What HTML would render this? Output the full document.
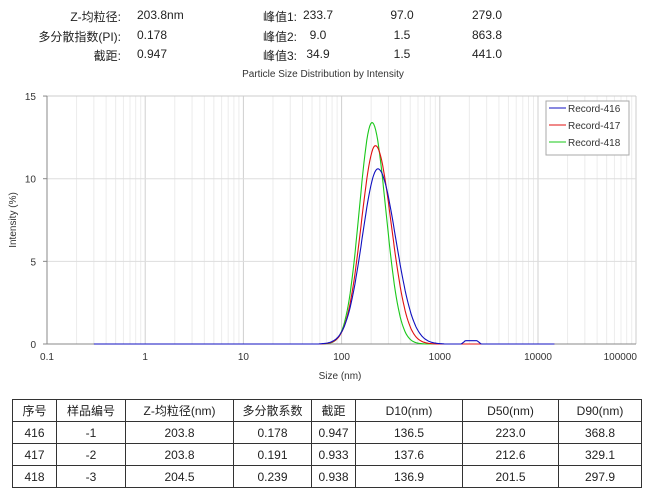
<!DOCTYPE html>
<html><head><meta charset="utf-8"><style>
body{margin:0;width:650px;height:499px;background:#fff;position:relative;overflow:hidden;font-family:"Liberation Sans","Noto Sans CJK SC",sans-serif;color:#222}
.t{position:absolute;font-size:12px;white-space:nowrap}
.r{text-align:right}
.c{text-align:center}
table{position:absolute;left:12px;top:399px;border-collapse:collapse;font-size:12px;font-family:"Liberation Sans","Noto Sans CJK SC",sans-serif}
td{border:1px solid #333;text-align:center;height:21px;padding:0}
</style></head><body>
<div class="t r" style="left:0;width:121px;top:8px">Z-均粒径:</div>
<div class="t r" style="left:0;width:121px;top:28px">多分散指数(PI):</div>
<div class="t r" style="left:0;width:121px;top:47px">截距:</div>
<div class="t" style="left:137px;top:8px">203.8nm</div>
<div class="t" style="left:137px;top:28px">0.178</div>
<div class="t" style="left:137px;top:47px">0.947</div>
<div class="t r" style="left:200px;width:97px;top:8px">峰值1:</div>
<div class="t r" style="left:200px;width:97px;top:28px">峰值2:</div>
<div class="t r" style="left:200px;width:97px;top:47px">峰值3:</div>
<div class="t c" style="left:298px;width:40px;top:8px">233.7</div>
<div class="t c" style="left:298px;width:40px;top:28px">9.0</div>
<div class="t c" style="left:298px;width:40px;top:47px">34.9</div>
<div class="t c" style="left:382px;width:40px;top:8px">97.0</div>
<div class="t c" style="left:382px;width:40px;top:28px">1.5</div>
<div class="t c" style="left:382px;width:40px;top:47px">1.5</div>
<div class="t c" style="left:467px;width:40px;top:8px">279.0</div>
<div class="t c" style="left:467px;width:40px;top:28px">863.8</div>
<div class="t c" style="left:467px;width:40px;top:47px">441.0</div>
<div class="t c" style="left:200px;width:246px;top:69px;font-size:10px;color:#333">Particle Size Distribution by Intensity</div>
<svg id="p" width="650" height="499" style="position:absolute;left:0;top:0" font-family="Liberation Sans, sans-serif" font-size="10" fill="#333"></svg>
<table>
<tr><td style="width:43px">序号</td><td style="width:68px">样品编号</td><td style="width:107px">Z-均粒径(nm)</td><td style="width:77px">多分散系数</td><td style="width:43px">截距</td><td style="width:106px">D10(nm)</td><td style="width:95px">D50(nm)</td><td style="width:82px">D90(nm)</td></tr>
<tr><td>416</td><td>-1</td><td>203.8</td><td>0.178</td><td>0.947</td><td>136.5</td><td>223.0</td><td>368.8</td></tr>
<tr><td>417</td><td>-2</td><td>203.8</td><td>0.191</td><td>0.933</td><td>137.6</td><td>212.6</td><td>329.1</td></tr>
<tr><td>418</td><td>-3</td><td>204.5</td><td>0.239</td><td>0.938</td><td>136.9</td><td>201.5</td><td>297.9</td></tr>
</table>
<script>
var s=document.getElementById('p'),h='';
var X=function(v){return 47+98.2*(Math.log10(v)+1)},Y=function(v){return 344-v*16.53};
for(var d=-1;d<5;d++)for(var k=1;k<10;k++){var x=X(k*Math.pow(10,d));h+='<line x1="'+x+'" x2="'+x+'" y1="96" y2="344" stroke="'+(k==1?'#d0d0d0':'#ececec')+'" stroke-width="1"/>';}
h+='<line x1="47" x2="636" y1="96" y2="96" stroke="#ccc"/><line x1="636" x2="636" y1="96" y2="344" stroke="#ccc"/>';
[5,10].forEach(function(v){h+='<line x1="47" x2="636" y1="'+Y(v)+'" y2="'+Y(v)+'" stroke="#ddd"/>'});
h+='<line x1="47" x2="47" y1="96" y2="344" stroke="#888"/><line x1="47" x2="636" y1="344" y2="344" stroke="#888"/>';
[0,5,10,15].forEach(function(v){h+='<text x="36" y="'+(Y(v)+4)+'" text-anchor="end">'+v+'</text><line x1="43" x2="47" y1="'+Y(v)+'" y2="'+Y(v)+'" stroke="#888"/>'});
['0.1','1','10','100','1000','10000','100000'].forEach(function(t,i){h+='<text x="'+(i==6?637:47+98.2*i)+'" y="360" text-anchor="'+(i==6?'end':'middle')+'">'+t+'</text>'});
h+='<text x="340" y="379" text-anchor="middle">Size (nm)</text>';
h+='<text transform="translate(16,220) rotate(-90)" text-anchor="middle">Intensity (%)</text>';
function curve(c,pk,mu,sg,sr,bump){var p='';for(var l=Math.log10(0.3);l<=Math.log10(15000);l+=0.01){var g=l<mu?sg:sr;var v=pk*Math.exp(-Math.pow(l-mu,2)/(2*g*g));if(v<0.01)v=0;if(bump&&l>3.22&&l<3.42)v+=0.2*Math.min(1,(l-3.22)/0.04,(3.42-l)/0.04);p+=(p?'L':'M')+X(Math.pow(10,l)).toFixed(1)+','+Y(v).toFixed(1);}return '<path d="'+p+'" fill="none" stroke="'+c+'" stroke-width="1.1"/>';}
h+=curve('#1ac81a',13.4,2.31,0.13,0.14);
h+=curve('#e01010',12.0,2.345,0.145,0.16);
h+=curve('#1010c0',10.6,2.37,0.16,0.18,1);
h+='<rect x="546" y="101" width="83" height="54" fill="#fff" stroke="#aaa"/>';
[['#1010c0','Record-416',112],['#e01010','Record-417',129],['#1ac81a','Record-418',146]].forEach(function(a){h+='<line x1="549" x2="566" y1="'+(a[2]-4)+'" y2="'+(a[2]-4)+'" stroke="'+a[0]+'"/><text x="568" y="'+a[2]+'">'+a[1]+'</text>'});
s.innerHTML=h;
</script>
</body></html>
